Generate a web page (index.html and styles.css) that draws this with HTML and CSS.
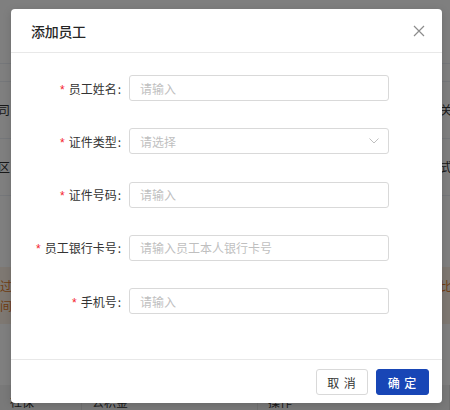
FILE: index.html
```html
<!DOCTYPE html>
<html lang="zh">
<head>
<meta charset="utf-8">
<link rel="stylesheet" href="styles.css">
</head>
<body>
<div class="page">
  <div class="bg-row h64"></div>
  <div class="bg-row h18"></div>
  <div class="bg-row h57"><span class="bg-l">公司</span><span class="bg-r">关系</span></div>
  <div class="bg-row h57"><span class="bg-l">地区</span><span class="bg-r">式样</span></div>
  <div class="bg-row h80 noline"></div>
  <div class="bg-banner"><span class="bn-l">如过<br>期间</span><span class="bn-r">比如<br>　　</span></div>
  <div class="bg-blank"></div>
  <div class="bg-head"><span class="c1">社保</span><span class="c2">公积金</span><span class="c3">操作</span></div>
</div>
<div class="mask"></div>
<div class="modal">
  <div class="modal-header">
    <span class="modal-title">添加员工</span>
    <svg class="close" width="12" height="12" viewBox="0 0 12 12"><path d="M1 1L11 11M11 1L1 11" stroke="#8c8c8c" stroke-width="1.2" fill="none"/></svg>
  </div>
  <div class="modal-body">
    <div class="form-row">
      <label class="form-label"><span class="req">*</span>员工姓名</label>
      <div class="input"><span class="ph">请输入</span></div>
    </div>
    <div class="form-row">
      <label class="form-label"><span class="req">*</span>证件类型</label>
      <div class="input select"><span class="ph">请选择</span>
        <svg class="arrow" width="10" height="6" viewBox="0 0 10 6"><path d="M0.5 0.5L5 5L9.5 0.5" stroke="#bfbfbf" stroke-width="1" fill="none"/></svg>
      </div>
    </div>
    <div class="form-row">
      <label class="form-label"><span class="req">*</span>证件号码</label>
      <div class="input"><span class="ph">请输入</span></div>
    </div>
    <div class="form-row">
      <label class="form-label"><span class="req">*</span>员工银行卡号</label>
      <div class="input"><span class="ph">请输入员工本人银行卡号</span></div>
    </div>
    <div class="form-row">
      <label class="form-label"><span class="req">*</span>手机号</label>
      <div class="input"><span class="ph">请输入</span></div>
    </div>
  </div>
  <div class="modal-footer">
    <button class="btn">取 消</button>
    <button class="btn primary">确 定</button>
  </div>
</div>
</body>
</html>
```
FILE: styles.css
```css
html, body {
  margin: 0;
  padding: 0;
}
body {
  width: 450px;
  height: 410px;
  overflow: hidden;
  position: relative;
  font-family: "Noto Sans CJK SC", "Noto Sans", sans-serif;
  background: #fff;
}
.page {
  display: flex;
  flex-direction: column;
  width: 450px;
  height: 410px;
  font-size: 12px;
  color: #333;
}
.bg-row {
  border-bottom: 1px solid #ebeef5;
  display: flex;
  align-items: center;
  justify-content: space-between;
  box-sizing: border-box;
}
.bg-row.noline { border-bottom: none; }
.h64 { height: 64px; }
.h18 { height: 18px; }
.h57 { height: 57px; }
.h80 { height: 80px; }
.bg-l { margin-left: -14px; }
.bg-r { margin-right: -14px; }
.bg-banner {
  height: 57px;
  margin-top: -8px;
  background: #fdf0e4;
  color: #e07b2a;
  display: flex;
  align-items: center;
  justify-content: space-between;
  line-height: 20px;
}
.bn-l { margin-left: -12px; }
.bn-r { margin-right: -14px; }
.bg-blank { height: 61px; }
.bg-head {
  flex: 1;
  background: #f2f2f2;
  display: flex;
  align-items: flex-end;
  font-size: 12px;
}
.bg-head span {
  border-right: 1px solid #e0e0e0;
  height: 100%;
  box-sizing: border-box;
  padding: 8px 0 0 10px;
}
.c1 { width: 82px; }
.c2 { width: 176px; }
.c3 { flex: 1; }

.mask {
  position: absolute;
  inset: 0;
  background: rgba(0, 0, 0, 0.5);
}
.modal {
  position: absolute;
  left: 11px;
  top: 9px;
  width: 431px;
  height: 394px;
  background: #fff;
  border-radius: 4px;
  box-shadow: 0 2px 8px rgba(0, 0, 0, 0.15);
  display: flex;
  flex-direction: column;
}
.modal-header {
  height: 44px;
  border-bottom: 1px solid #e8e8e8;
  display: flex;
  align-items: center;
  justify-content: space-between;
  padding: 0 17px 0 20px;
  box-sizing: border-box;
}
.modal-title {
  font-size: 14px;
  font-weight: 500;
  color: #262626;
  letter-spacing: -0.3px;
}
.close { display: block; }
.modal-body {
  flex: 1;
  padding-top: 22px;
  display: flex;
  flex-direction: column;
  gap: 27.25px;
}
.form-row {
  display: flex;
  align-items: center;
  height: 26px;
}
.form-label {
  width: 110px;
  margin-right: 8px;
  text-align: right;
  font-size: 12px;
  color: #333;
  white-space: nowrap;
}
.form-label::after {
  content: ":";
  margin-left: 1px;
}
.req {
  color: #f5222d;
  margin-right: 4px;
  font-family: "Liberation Sans", sans-serif;
  font-size: 12px;
}
.input {
  width: 260px;
  height: 26px;
  box-sizing: border-box;
  border: 1px solid #d9d9d9;
  border-radius: 3px;
  padding: 0 10px;
  display: flex;
  align-items: center;
  justify-content: space-between;
}
.ph {
  font-size: 12px;
  color: #bfbfbf;
}
.select { padding-right: 9px; }
.arrow { display: block; }
.modal-footer {
  height: 44px;
  border-top: 1px solid #e8e8e8;
  box-sizing: border-box;
  display: flex;
  justify-content: flex-end;
  align-items: flex-start;
  padding: 9px 13px 0 0;
  gap: 8px;
}
.btn {
  width: 52px;
  height: 26px;
  border: 1px solid #d9d9d9;
  border-radius: 3px;
  background: #fff;
  color: #333;
  font-family: "Noto Sans CJK SC", sans-serif;
  font-size: 12px;
  padding: 0;
  letter-spacing: 1px;
}
.btn.primary {
  width: 53px;
  background: #1846b6;
  border-color: #1846b6;
  color: #fff;
  font-weight: 500;
}
```
